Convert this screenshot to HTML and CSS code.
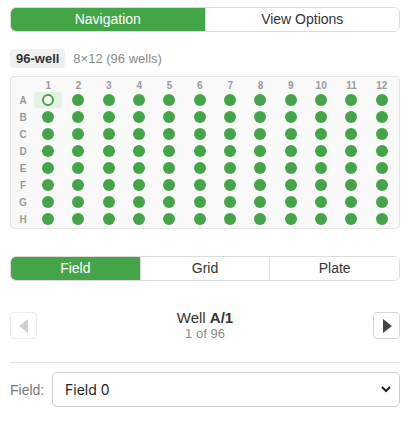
FILE: index.html
```html
<!DOCTYPE html>
<html lang="en">
<head>
  <meta charset="UTF-8">
  <title>Plate Navigation</title>
  <link rel="stylesheet" href="styles.css">
</head>
<body>
  <div class="panel">
    <!-- Main tabs -->
    <div class="seg seg-top">
      <div class="seg-btn active">Navigation</div>
      <div class="seg-btn">View Options</div>
    </div>

    <div class="plate-meta">
      <span class="badge">96-well</span>
      <span class="dims">8×12 (96 wells)</span>
    </div>

    <!-- Plate map -->
    <div class="plate" id="plate"></div>

    <!-- View mode -->
    <div class="seg seg-mode">
      <div class="seg-btn active">Field</div>
      <div class="seg-btn">Grid</div>
      <div class="seg-btn">Plate</div>
    </div>

    <div class="well-nav">
      <button class="nav-btn" disabled>
        <svg width="10" height="14" viewBox="0 0 10 14"><path d="M9 0 L0 7 L9 14 Z" fill="#cfcfcf"/></svg>
      </button>
      <div class="well-info">
        <div class="well-name">Well <strong>A/1</strong></div>
        <div class="well-count">1 of 96</div>
      </div>
      <button class="nav-btn">
        <svg width="10" height="14" viewBox="0 0 10 14"><path d="M1 0 L10 7 L1 14 Z" fill="#444"/></svg>
      </button>
    </div>

    <div class="divider"></div>

    <div class="field-row">
      <label for="fieldSelect">Field:</label>
      <div class="select-wrap">
        <select id="fieldSelect">
          <option>Field 0</option>
          <option>Field 1</option>
          <option>Field 2</option>
        </select>
        <svg class="chev" width="10" height="7" viewBox="0 0 10 7"><path d="M1 1 L5 5 L9 1" stroke="#222" stroke-width="2" fill="none"/></svg>
      </div>
    </div>
  </div>

  <script>
    // Build the 96-well grid
    const plate = document.getElementById("plate");
    const rows = ["A", "B", "C", "D", "E", "F", "G", "H"];

    plate.appendChild(document.createElement("div"));
    for (let c = 1; c <= 12; c++) {
      const head = document.createElement("div");
      head.className = "col-head";
      head.textContent = c;
      plate.appendChild(head);
    }

    rows.forEach((r) => {
      const label = document.createElement("div");
      label.className = "row-head";
      label.textContent = r;
      plate.appendChild(label);
      for (let c = 1; c <= 12; c++) {
        const cell = document.createElement("div");
        cell.className = "cell";
        const dot = document.createElement("span");
        dot.className = "dot";
        if (r === "A" && c === 1) {
          cell.classList.add("selected");
        }
        cell.appendChild(dot);
        plate.appendChild(cell);
      }
    });
  </script>
</body>
</html>
```

FILE: styles.css
```css
* {
  margin: 0;
  padding: 0;
  box-sizing: border-box;
  font-family: "Liberation Sans", Arial, sans-serif;
}

body {
  background-color: #fff;
  color: #333;
}

.panel {
  width: 390px;
  margin: 7px 0 0 10px;
}

/* Segmented controls */
.seg {
  display: flex;
  border: 1px solid #dcdcdc;
  border-radius: 6px;
  overflow: hidden;
}

.seg-btn {
  flex: 1;
  text-align: center;
  font-size: 14px;
  color: #333;
  background-color: #fff;
}

.seg-btn + .seg-btn {
  border-left: 1px solid #dcdcdc;
}

.seg-btn.active {
  background-color: #43a548;
  color: #fff;
  border-color: #43a548;
}

.seg-top .seg-btn {
  height: 23px;
  line-height: 23px;
}

.seg-mode {
  margin-top: 27px;
}

.seg-mode .seg-btn {
  height: 23px;
  line-height: 23px;
}

/* Plate info */
.plate-meta {
  display: flex;
  align-items: center;
  margin-top: 17px;
  height: 19px;
}

.badge {
  background-color: #f0f0f0;
  color: #333;
  font-weight: bold;
  font-size: 13px;
  padding: 0 6px;
  height: 19px;
  line-height: 19px;
  border-radius: 4px;
}

.dims {
  color: #8a8a8a;
  font-size: 13px;
  margin-left: 8px;
}

/* Plate grid */
.plate {
  margin-top: 8px;
  border: 1px solid #e6e6e6;
  border-radius: 4px;
  background-color: #f9f9f9;
  display: grid;
  grid-template-columns: 18px repeat(12, 1fr);
  grid-template-rows: 12px repeat(8, 16px);
  column-gap: 2px;
  row-gap: 1px;
  padding: 2px 3px 1px 3px;
}

.col-head,
.row-head {
  font-size: 10px;
  font-weight: bold;
  color: #9a9a9a;
  display: flex;
  align-items: center;
  justify-content: center;
}

.cell {
  display: flex;
  align-items: center;
  justify-content: center;
  border-radius: 2px;
}

.dot {
  width: 12px;
  height: 12px;
  border-radius: 50%;
  background-color: #43a548;
}

.cell.selected {
  background-color: #e4f2e4;
}

.cell.selected .dot {
  background-color: #fff;
  border: 2px solid #43a548;
}

/* Well navigation */
.well-nav {
  display: flex;
  justify-content: space-between;
  align-items: flex-start;
  margin-top: 31px;
}

.nav-btn {
  width: 27px;
  height: 27px;
  border: 1px solid #d6d6d6;
  border-radius: 4px;
  background-color: #fff;
  display: flex;
  align-items: center;
  justify-content: center;
  cursor: pointer;
}

.nav-btn:disabled {
  border-color: #ececec;
  cursor: default;
}

.well-info {
  text-align: center;
  margin-top: -3px;
}

.well-name {
  font-size: 15px;
  color: #333;
  line-height: 17px;
}

.well-count {
  font-size: 13px;
  color: #8a8a8a;
  line-height: 15px;
}

.divider {
  height: 1px;
  background-color: #e6e6e6;
  margin-top: 21px;
}

/* Field selector */
.field-row {
  display: flex;
  align-items: center;
  margin-top: 9px;
}

.field-row label {
  font-size: 14px;
  color: #777;
  width: 42px;
}

.select-wrap {
  position: relative;
  flex: 1;
}

.select-wrap select {
  width: 100%;
  height: 35px;
  border: 1px solid #cfcfcf;
  border-radius: 5px;
  background-color: #fff;
  padding: 0 12px;
  font-size: 14px;
  font-family: Inter, "Liberation Sans", sans-serif;
  color: #222;
  appearance: none;
}

.chev {
  position: absolute;
  right: 9px;
  top: 14px;
  pointer-events: none;
}
```
